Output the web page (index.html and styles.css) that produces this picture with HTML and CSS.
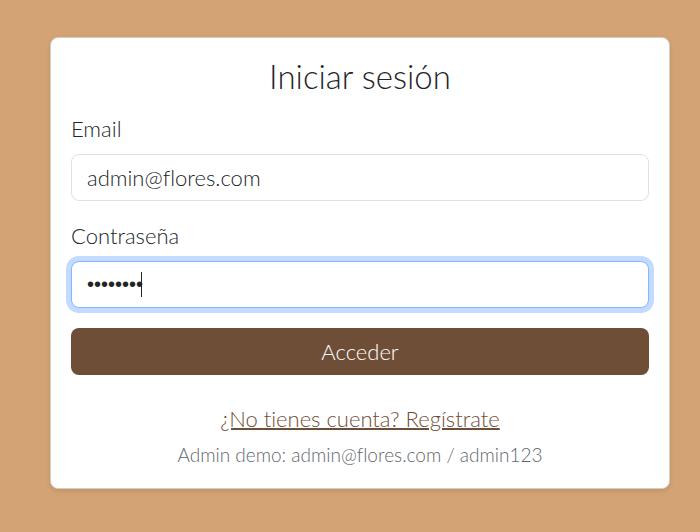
FILE: index.html
```html
<!DOCTYPE html>
<html lang="es">
<head>
<meta charset="utf-8">
<meta name="viewport" content="width=device-width, initial-scale=1">
<title>Iniciar sesión</title>
<link rel="stylesheet" href="styles.css">
</head>
<body>
<main class="card">
  <h1 class="title">Iniciar sesión</h1>
  <form class="form">
    <div class="field">
      <label class="label" for="email">Email</label>
      <input class="input" id="email" type="email" value="admin@flores.com">
    </div>
    <div class="field">
      <label class="label" for="password">Contraseña</label>
      <div class="control">
        <input class="input input-password" id="password" type="password" value="admin123" autofocus>
        <span class="caret"></span>
      </div>
    </div>
    <button class="button" type="submit">Acceder</button>
  </form>
  <a class="register" href="#registro">¿No tienes cuenta? Regístrate</a>
  <p class="demo">Admin demo: admin@flores.com / admin123</p>
</main>
</body>
</html>
```
FILE: styles.css
```css
* {
  box-sizing: border-box;
}

body {
  margin: 0;
  min-height: 100vh;
  padding: 37px 30px 43px 50px;
  background: #d4a373;
  color: #212529;
  font-family: Lato, "Open Sans", sans-serif;
  font-size: 22px;
  font-weight: 300;
  font-variant-ligatures: none;
  line-height: 30px;
}

.card {
  display: flex;
  flex-direction: column;
  padding: 20px;
  border: 1px solid #d0cdcb;
  border-radius: 8px;
  background: #fff;
  box-shadow: 0 2px 5px rgba(0, 0, 0, 0.1);
}

.title {
  margin: 0 0 20px;
  font-size: 33px;
  font-weight: 300;
  line-height: 36px;
  text-align: center;
}

.form,
.field {
  display: flex;
  flex-direction: column;
}

.form {
  gap: 20px;
}

.field {
  gap: 10px;
}

.control {
  position: relative;
  display: flex;
}

.input,
.button {
  width: 100%;
  height: 47px;
  border-radius: 8px;
  font: inherit;
}

.input {
  padding: 7px 15px;
  border: 1px solid #dee2e6;
  background: #fff;
  color: #212529;
}

.input:focus {
  outline: 0;
  border-color: #86b7fe;
  box-shadow: 0 0 0 5px #c2dbfe;
}

.input-password {
  font-family: "Liberation Sans", sans-serif;
  font-size: 20px;
  caret-color: transparent;
}

.caret {
  position: absolute;
  top: 11px;
  left: 70px;
  width: 1px;
  height: 25px;
  background: #212529;
}

.button {
  padding: 0;
  border: 0;
  background: #6f4e37;
  color: #fff;
}

.register {
  align-self: center;
  margin-top: 29px;
  color: #6f4e37;
  text-decoration-thickness: 2px;
}

.demo {
  margin: 8px 0 0;
  color: #5f676e;
  font-size: 19px;
  line-height: 26px;
  text-align: center;
}
```
